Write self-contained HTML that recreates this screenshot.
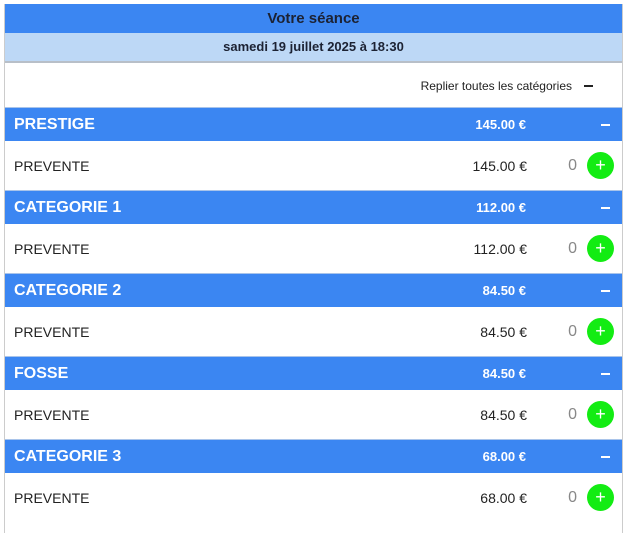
<!DOCTYPE html><html><head><style>
body{margin:0;background:#fff;font-family:"Liberation Sans",sans-serif;}
.w{position:absolute;left:4px;top:4px;width:617px;border-left:1px solid #ccc;border-right:1px solid #ccc;height:529px;}
.h1{height:29px;background:#3b86f2;color:#1c2233;font-weight:bold;font-size:15px;text-align:center;line-height:29px;}
.h2{height:28px;background:#bdd8f6;color:#1c2233;font-weight:bold;font-size:13px;text-align:center;line-height:28px;border-bottom:2px solid #b8bfc8;}
.r{height:44px;position:relative;font-size:12px;color:#222;}
.r span{position:absolute;right:50px;top:16px;}
.r b{position:absolute;right:29px;top:22px;width:9px;height:2px;background:#222;}
.c{height:33px;background:#3b86f2;color:#fff;font-weight:bold;position:relative;border-top:1px solid #a9c4ea;}
.c .n{position:absolute;left:9px;top:8px;font-size:16px;}
.c .p{position:absolute;right:96px;top:9px;font-size:13px;}
.c .m{position:absolute;right:12px;top:16px;width:9px;height:2px;background:#fff;}
.i{height:49px;position:relative;color:#222;font-size:14px;}
.i .n{position:absolute;left:9px;top:17px;}
.i .p{position:absolute;right:95px;top:17px;}
.i .z{position:absolute;right:45px;top:16px;color:#888;font-size:16px;}
.i .g{position:absolute;right:8px;top:11px;width:27px;height:27px;border-radius:50%;background:#13ec13;color:#fff;text-align:center;line-height:26px;font-size:18px;}
</style></head><body><div class="w">
<div class="h1">Votre séance</div>
<div class="h2">samedi 19 juillet 2025 à 18:30</div>
<div class="r"><span>Replier toutes les catégories</span><b></b></div>
<div class="c"><div class="n">PRESTIGE</div><div class="p">145.00 €</div><div class="m"></div></div>
<div class="i"><div class="n">PREVENTE</div><div class="p">145.00 €</div><div class="z">0</div><div class="g">+</div></div>
<div class="c"><div class="n">CATEGORIE 1</div><div class="p">112.00 €</div><div class="m"></div></div>
<div class="i"><div class="n">PREVENTE</div><div class="p">112.00 €</div><div class="z">0</div><div class="g">+</div></div>
<div class="c"><div class="n">CATEGORIE 2</div><div class="p">84.50 €</div><div class="m"></div></div>
<div class="i"><div class="n">PREVENTE</div><div class="p">84.50 €</div><div class="z">0</div><div class="g">+</div></div>
<div class="c"><div class="n">FOSSE</div><div class="p">84.50 €</div><div class="m"></div></div>
<div class="i"><div class="n">PREVENTE</div><div class="p">84.50 €</div><div class="z">0</div><div class="g">+</div></div>
<div class="c"><div class="n">CATEGORIE 3</div><div class="p">68.00 €</div><div class="m"></div></div>
<div class="i"><div class="n">PREVENTE</div><div class="p">68.00 €</div><div class="z">0</div><div class="g">+</div></div>
</div></body></html>
